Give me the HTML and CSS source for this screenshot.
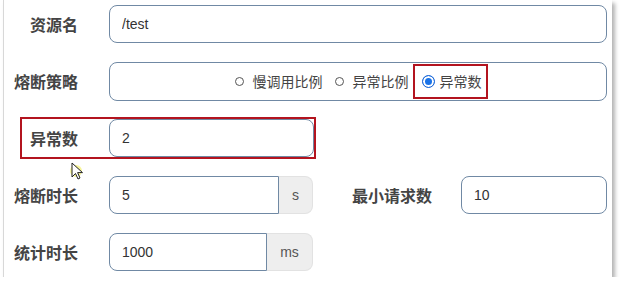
FILE: index.html
```html
<!DOCTYPE html>
<html lang="zh-CN">

<head>
    <meta charset="UTF-8">
    <meta name="viewport" content="width=device-width, initial-scale=1.0">
    <title>熔断规则</title>
    <link rel="stylesheet" href="styles.css">
</head>

<body>
    <div class="rule-card">
        <!-- 资源名 -->
        <div class="form-row">
            <label class="form-label">资源名</label>
            <input class="form-input input-wide" type="text" value="/test" readonly>
        </div>

        <!-- 熔断策略 -->
        <div class="form-row">
            <label class="form-label">熔断策略</label>
            <div class="radio-box">
                <span class="radio-item"><i class="radio-dot"></i>慢调用比例</span>
                <span class="radio-item"><i class="radio-dot"></i>异常比例</span>
                <span class="radio-item checked marked"><i class="radio-dot"></i>异常数</span>
            </div>
        </div>

        <!-- 异常数 (highlighted) -->
        <div class="form-row">
            <div class="marked-row">
                <label class="form-label label-short">异常数</label>
                <input class="form-input input-mid" type="text" value="2" readonly>
            </div>
            <svg class="mouse-cursor" width="16" height="20" viewBox="0 0 16 20">
                <circle cx="6" cy="9" r="6" fill="#f4f27a" opacity="0.75"/>
                <path d="M2 1 L2 15 L5.5 11.5 L8 17 L10 16 L7.6 10.6 L12.5 10.6 Z" fill="#fff" stroke="#222" stroke-width="1"/>
            </svg>
        </div>

        <!-- 熔断时长 / 最小请求数 -->
        <div class="form-row">
            <label class="form-label">熔断时长</label>
            <div class="input-group">
                <input class="form-input group-input input-s" type="text" value="5" readonly>
                <span class="group-addon addon-s">s</span>
            </div>
            <label class="form-label label-min">最小请求数</label>
            <input class="form-input input-min" type="text" value="10" readonly>
        </div>

        <!-- 统计时长 -->
        <div class="form-row">
            <label class="form-label">统计时长</label>
            <div class="input-group">
                <input class="form-input group-input input-ms" type="text" value="1000" readonly>
                <span class="group-addon addon-ms">ms</span>
            </div>
        </div>
    </div>
</body>

</html>
```

FILE: styles.css
```css
/* Page and card */
body {
    margin: 0;
    padding: 0;
    background-color: #fff;
    font-family: "Liberation Sans", "Noto Sans CJK SC", sans-serif;
    color: #333;
}

.rule-card {
    width: 608px;
    height: 272px;
    margin-left: 3px;
    padding-top: 5px;
    border-left: 1px solid #d8d8d8;
    background-color: #fff;
    box-shadow: 3px 3px 4px rgba(0, 0, 0, 0.3);
    display: flex;
    flex-direction: column;
    gap: 19px;
}

/* Rows */
.form-row {
    position: relative;
    display: flex;
    align-items: center;
    height: 38px;
}

.form-label {
    flex: 0 0 74px;
    margin-right: 31px;
    text-align: right;
    font-family: "Noto Sans CJK SC", sans-serif;
    font-size: 16px;
    font-weight: bold;
    color: #444;
}

.label-short {
    flex-basis: 56px;
}

.label-min {
    flex-basis: 119px;
    margin-right: 29px;
}

/* Inputs */
.form-input {
    box-sizing: border-box;
    height: 38px;
    padding: 0 12px;
    border: 1px solid #7089a4;
    border-radius: 8px;
    font-family: "Liberation Sans", sans-serif;
    font-size: 14px;
    color: #333;
    background-color: #fff;
    outline: none;
}

.input-wide {
    width: 498px;
}

.input-mid {
    width: 205px;
}

.input-min {
    width: 146px;
}

.input-s {
    width: 170px;
}

.input-ms {
    width: 158px;
}

/* Input group with unit addon */
.input-group {
    display: flex;
    height: 38px;
}

.group-input {
    border-top-right-radius: 0;
    border-bottom-right-radius: 0;
}

.group-addon {
    box-sizing: border-box;
    display: flex;
    align-items: center;
    justify-content: center;
    height: 38px;
    background-color: #eee;
    border: 1px solid #e2e2e2;
    border-left: none;
    border-radius: 0 8px 8px 0;
    font-size: 14px;
    color: #555;
}

.addon-s {
    width: 34px;
}

.addon-ms {
    width: 46px;
}

/* Radio group */
.radio-box {
    box-sizing: border-box;
    width: 498px;
    height: 39px;
    border: 1px solid #7089a4;
    border-radius: 8px;
    display: flex;
    align-items: center;
    justify-content: center;
    gap: 12px;
    padding-left: 6px;
    font-family: "Noto Sans CJK SC", sans-serif;
    font-size: 14px;
    color: #444;
}

.radio-item {
    display: inline-flex;
    align-items: center;
    gap: 9px;
}

.radio-dot {
    box-sizing: border-box;
    width: 9px;
    height: 9px;
    border: 1px solid #555;
    border-radius: 50%;
}

.radio-item.checked {
    gap: 5px;
}

.radio-item.checked .radio-dot {
    width: 13px;
    height: 13px;
    border: 1px solid #1a66d6;
    background-color: #1a73e8;
    box-shadow: inset 0 0 0 2px #fff;
}

/* Red highlight boxes */
.marked {
    margin-left: -8px;
    height: 31px;
    padding: 0 4px 0 7px;
    border: 2px solid #b3141f;
}

.marked-row {
    display: flex;
    align-items: center;
    width: 292px;
    height: 38px;
    margin-left: 18px;
    outline: 2px solid #b3141f;
    overflow: hidden;
}

.marked-row .form-input {
    border-right-color: #7089a4;
}

/* Mouse pointer captured in the screenshot */
.mouse-cursor {
    position: absolute;
    left: 66px;
    top: 43px;
}
```
